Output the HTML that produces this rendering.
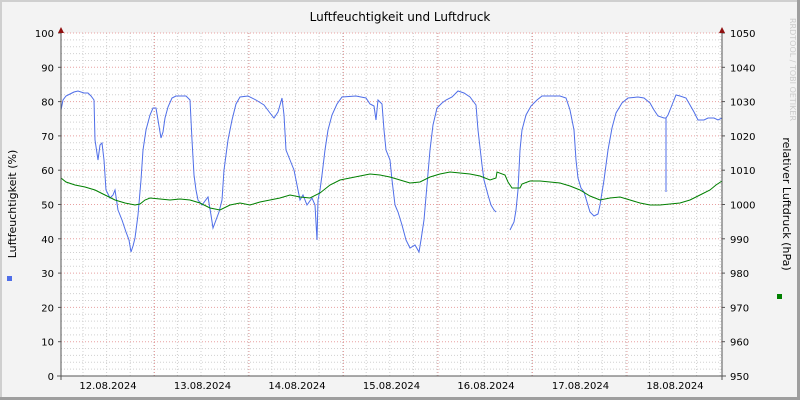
<!DOCTYPE html>
<html><head><style>
body{margin:0;background:#f3f3f3;}
svg{display:block;font-family:"DejaVu Sans","Liberation Sans",sans-serif;}
</style></head><body>
<svg width="800" height="400" viewBox="0 0 800 400" xmlns="http://www.w3.org/2000/svg">
<rect x="0" y="0" width="800" height="400" fill="#f3f3f3"/>
<rect x="0" y="0" width="800" height="2" fill="#cfcfcf"/>
<rect x="0" y="0" width="2" height="400" fill="#cfcfcf"/>
<rect x="0" y="397" width="800" height="3" fill="#9e9e9e"/>
<rect x="797" y="0" width="3" height="400" fill="#9e9e9e"/>
<rect x="61" y="33" width="661" height="343" fill="#ffffff"/>
<g id="grid"></g>
<text x="400" y="21" font-size="12" text-anchor="middle" fill="#000">Luftfeuchtigkeit und Luftdruck</text>
<text x="16" y="204" font-size="11" text-anchor="middle" transform="rotate(-90 16 204)">Luftfeuchtigkeit (%)</text>
<text x="783" y="204" font-size="11" text-anchor="middle" transform="rotate(90 783 204)">relativer Luftdruck (hPa)</text>
<text x="790" y="18" font-size="8" fill="#ccc" transform="rotate(90 790 18)">RRDTOOL / TOBI OETIKER</text>
<rect x="7" y="276" width="5" height="5" fill="#4f6ee8"/>
<rect x="777" y="294" width="5" height="5" fill="#008000"/>
<g id="labels" font-size="10" fill="#000"></g>
<polyline fill="none" stroke="#4f6ee8" stroke-width="1" points="61,110 63,100 66,96 70,94 74,92 78,91 84,93 88,93 91,96 94,100 95,140 98,160 100,145 102,143 104,160 106,190 110,198 113,195 115,190 118,210 122,220 126,232 129,240 131,252 133,246 135,238 138,215 141,180 143,150 146,130 150,115 153,108 156,108 158,120 161,138 163,132 165,118 168,107 172,98 176,96 186,96 190,100 192,140 194,175 196,190 198,200 202,205 208,197 211,215 213,228 216,220 219,212 222,200 224,170 228,140 232,120 236,104 240,97 248,96 256,100 264,105 270,113 274,118 278,112 282,98 284,115 286,150 290,160 294,170 297,185 300,200 303,195 307,205 312,198 315,205 317,240 318,200 320,190 322,175 325,150 328,130 332,115 337,104 342,97 356,96 366,98 370,104 374,106 376,120 378,100 382,104 384,130 386,150 390,160 392,180 395,205 398,212 402,225 406,240 410,248 415,245 419,252 421,240 424,220 427,185 430,150 433,125 437,108 442,103 446,100 452,97 458,91 464,93 470,97 476,105 478,130 482,165 484,180 488,195 491,205 494,210 496,212"/>
<polyline fill="none" stroke="#4f6ee8" stroke-width="1" points="510,230 514,222 516,210 518,190 520,150 522,130 526,115 531,106 537,100 542,96 560,96 566,98 570,110 574,130 576,160 578,178 581,188 584,192 587,202 590,212 594,216 598,214 600,205 604,180 608,150 612,128 616,113 622,103 628,98 638,97 644,98 650,103 654,110 658,116 664,118 666,118 666,192 666,118 668,115 672,105 676,95 680,96 686,98 690,105 694,112 698,120 704,120 708,118 714,118 718,120 722,118"/>
<polyline fill="none" stroke="#008000" stroke-width="1" points="61,178 66,182 75,185 85,187 95,190 105,195 115,200 125,203 135,205 140,204 145,200 150,198 160,199 170,200 180,199 190,200 200,203 210,208 220,210 230,205 240,203 250,205 260,202 270,200 280,198 290,195 300,197 310,198 320,193 330,185 340,180 350,178 360,176 370,174 380,175 390,177 400,180 410,183 420,182 430,177 440,174 450,172 460,173 470,174 480,176 490,180 496,178 497,172 505,175 508,182 512,188 520,188 522,184 530,181 540,181 550,182 560,183 570,186 580,190 590,196 600,200 610,198 620,197 630,200 640,203 650,205 660,205 670,204 680,203 690,200 700,195 710,190 716,185 722,181"/>
<line x1="61" y1="30" x2="61" y2="380" stroke="#555"/>
<line x1="722" y1="30" x2="722" y2="380" stroke="#555"/>
<line x1="57" y1="376" x2="726" y2="376" stroke="#555"/>
<polygon points="58,33 64,33 61,27" fill="#901010"/>
<polygon points="719,33 725,33 722,27" fill="#901010"/>
</svg>
<script>
var ns="http://www.w3.org/2000/svg",g=document.getElementById('grid'),L=document.getElementById('labels');
function el(p,t,a){var e=document.createElementNS(ns,t);for(var k in a)e.setAttribute(k,a[k]);p.appendChild(e);return e;}
for(var v=2;v<100;v+=2){var y=376-v*3.43;if(v%10)el(g,'line',{x1:61,x2:722,y1:y,y2:y,stroke:'#d0d0d0','stroke-dasharray':'1,2'});}
var mids=[154.5,249,343.5,438,532.5,627];
for(var x=83;x<722;x+=23.6){el(g,'line',{x1:x,x2:x,y1:33,y2:376,stroke:'#d0d0d0','stroke-dasharray':'1,2'});}
for(var v=0;v<=100;v+=10){var y=376-v*3.43;
 if(v>0)el(g,'line',{x1:61,x2:722,y1:y,y2:y,stroke:'#e8a0a0','stroke-dasharray':'1,2'});
 el(g,'line',{x1:58,x2:61,y1:y,y2:y,stroke:'#555'});el(g,'line',{x1:722,x2:725,y1:y,y2:y,stroke:'#555'});
 var t=el(L,'text',{x:54,y:y+4,'text-anchor':'end'});t.textContent=v;
 var t2=el(L,'text',{x:730,y:y+4});t2.textContent=950+v;}
mids.forEach(function(x){el(g,'line',{x1:x,x2:x,y1:33,y2:376,stroke:'#e8a0a0','stroke-dasharray':'1,2'});});
var d=['12','13','14','15','16','17','18'];
d.forEach(function(s,i){var t=el(L,'text',{x:108+i*94.5,y:389,'text-anchor':'middle'});t.textContent=s+'.08.2024';});
</script>
</body></html>
